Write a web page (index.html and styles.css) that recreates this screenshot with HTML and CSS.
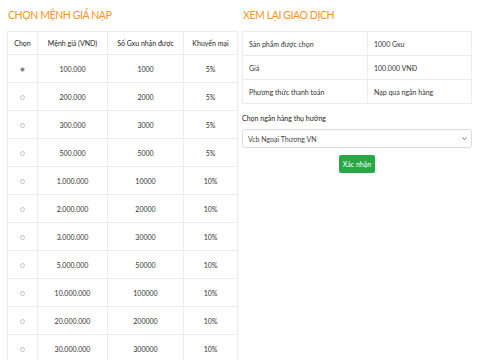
FILE: index.html
```html
<!DOCTYPE html>
<html lang="vi">
<head>
    <meta charset="UTF-8">
    <meta name="viewport" content="width=device-width, initial-scale=1.0">
    <title>Nạp Gxu</title>
    <link rel="stylesheet" href="styles.css">
</head>
<body>

    <div class="page">
        <!-- Left: price list -->
        <section class="col">
            <h2 class="section-title">Chọn mệnh giá nạp</h2>
            <table class="price-table">
                <thead>
                    <tr>
                        <th class="c-pick">Chọn</th>
                        <th class="c-price">Mệnh giá (VND)</th>
                        <th class="c-gxu">Số Gxu nhận được</th>
                        <th>Khuyến mại</th>
                    </tr>
                </thead>
                <tbody>
                    <tr><td><input type="radio" name="pack" checked></td><td>100.000</td><td>1000</td><td>5%</td></tr>
                    <tr><td><input type="radio" name="pack"></td><td>200.000</td><td>2000</td><td>5%</td></tr>
                    <tr><td><input type="radio" name="pack"></td><td>300.000</td><td>3000</td><td>5%</td></tr>
                    <tr><td><input type="radio" name="pack"></td><td>500.000</td><td>5000</td><td>5%</td></tr>
                    <tr><td><input type="radio" name="pack"></td><td>1.000.000</td><td>10000</td><td>10%</td></tr>
                    <tr><td><input type="radio" name="pack"></td><td>2.000.000</td><td>20000</td><td>10%</td></tr>
                    <tr><td><input type="radio" name="pack"></td><td>3.000.000</td><td>30000</td><td>10%</td></tr>
                    <tr><td><input type="radio" name="pack"></td><td>5.000.000</td><td>50000</td><td>10%</td></tr>
                    <tr><td><input type="radio" name="pack"></td><td>10.000.000</td><td>100000</td><td>10%</td></tr>
                    <tr><td><input type="radio" name="pack"></td><td>20.000.000</td><td>200000</td><td>10%</td></tr>
                    <tr><td><input type="radio" name="pack"></td><td>30.000.000</td><td>300000</td><td>10%</td></tr>
                </tbody>
            </table>
        </section>

        <!-- Right: review -->
        <section class="col">
            <h2 class="section-title">Xem lại giao dịch</h2>
            <table class="review-table">
                <tr><td class="r-label">Sản phẩm được chọn</td><td>1000 Gxu</td></tr>
                <tr><td class="r-label">Giá</td><td>100.000 VNĐ</td></tr>
                <tr><td class="r-label">Phương thức thanh toán</td><td>Nạp qua ngân hàng</td></tr>
            </table>

            <label class="bank-label" for="bank">Chọn ngân hàng thụ hưởng</label>
            <div class="select-box">
                <select id="bank">
                    <option>Vcb Ngoại Thương VN</option>
                </select>
                <svg class="caret" width="5" height="3" viewBox="0 0 5 3"><path d="M0.5 0.5 L2.5 2.5 L4.5 0.5" fill="none" stroke="#666" stroke-width="0.9"/></svg>
            </div>

            <div class="actions">
                <button class="confirm">Xác nhận</button>
            </div>
        </section>
    </div>

</body>
</html>
```

FILE: styles.css
```css
/* Basic Styling */
html, body {
    margin: 0;
    padding: 0;
    background: #ffffff;
    color: #333;
    font-family: Lato, "Noto Sans", sans-serif;
    font-size: 7px;
    overflow: hidden;
}

.page {
    display: grid;
    grid-template-columns: 231px 230px;
    gap: 4px;
    padding: 8px 8px 0 7px;
}

.section-title {
    margin: 0 0 9px 1px;
    font-size: 10.5px;
    line-height: 14px;
    font-weight: 400;
    text-transform: uppercase;
    letter-spacing: -0.4px;
    color: #f7931e; /* Orange headings */
}

/* Price list */
.price-table {
    width: 100%;
    border-collapse: collapse;
    border: 1px solid #e8e8e8;
}

.price-table th,
.price-table td {
    border: 1px solid #ececec;
    text-align: center;
    padding: 0;
}

.price-table th {
    height: 22px;
    font-weight: 400;
    color: #222;
}

.price-table td {
    height: 27px;
}

.c-pick { width: 29px; }
.c-price { width: 69px; }
.c-gxu { width: 75px; }

/* Small grey radio */
.price-table input {
    appearance: none;
    width: 5px;
    height: 5px;
    margin: 0;
    border: 1px solid #c4c4c4;
    border-radius: 50%;
    background: #fff;
    vertical-align: middle;
    box-sizing: border-box;
}

.price-table input:checked {
    border-color: #d0d0d0;
    background: radial-gradient(circle, #777 0 1.6px, #fff 1.8px);
}

/* Review table */
.review-table {
    width: 100%;
    border-collapse: collapse;
    border: 1px solid #e8e8e8;
}

.review-table td {
    border: 1px solid #ececec;
    height: 23px;
    padding: 0 6px;
}

.r-label { width: 112px; }

.bank-label {
    display: block;
    margin: 10px 0 7px;
    color: #222;
}

.select-box {
    position: relative;
}

.select-box select {
    display: block;
    width: 100%;
    height: 19px;
    padding: 0 5px;
    border: 1px solid #dcdcdc;
    border-radius: 3px;
    background: #fff;
    color: #444;
    font-family: inherit;
    font-size: 7px;
    appearance: none;
}

.caret {
    position: absolute;
    right: 5px;
    top: 8px;
}

.actions {
    display: flex;
    justify-content: center;
    margin-top: 7px;
}

.confirm {
    background: #28a745;
    color: #fff;
    border: none;
    border-radius: 2px;
    font-family: inherit;
    font-size: 7px;
    width: 36px;
    height: 18px;
    padding: 0;
    cursor: pointer;
}
```
